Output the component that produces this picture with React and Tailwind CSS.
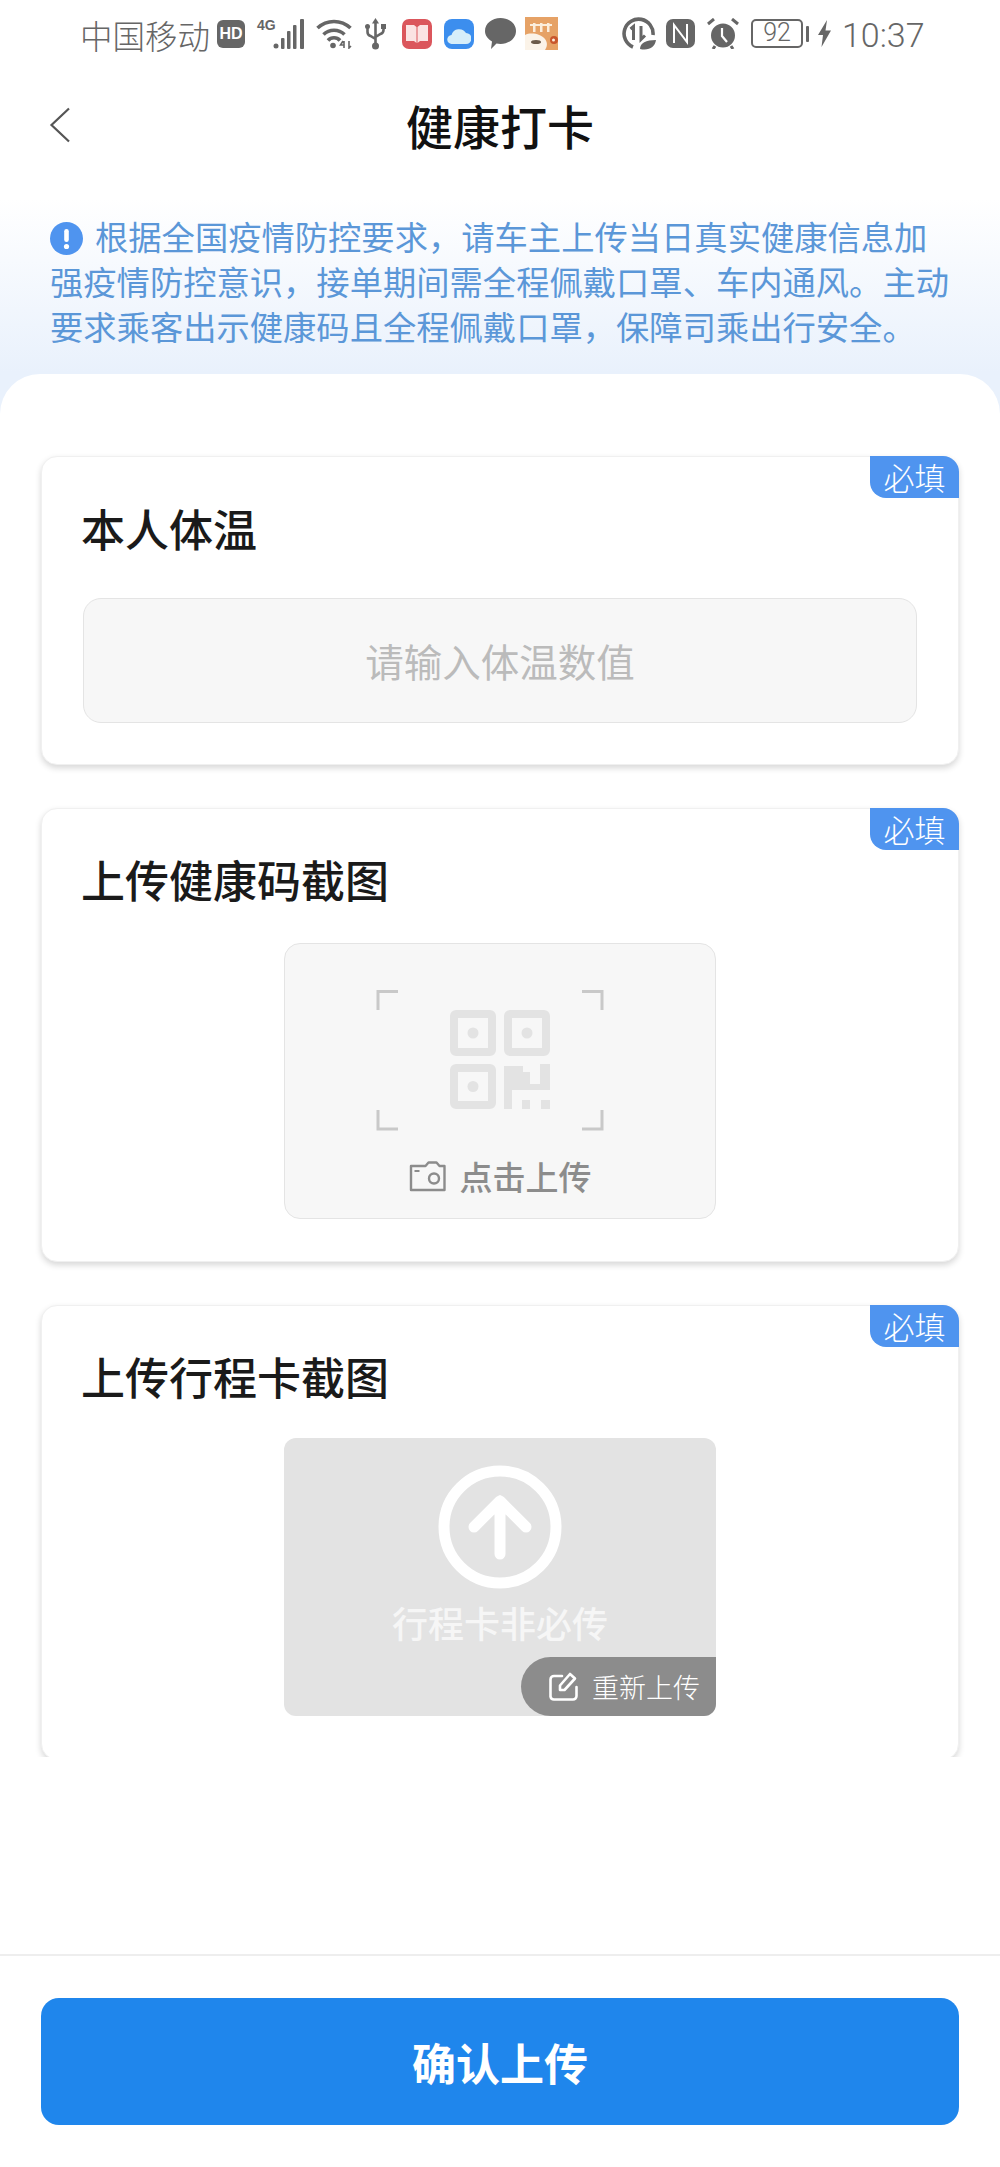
import React from "react";

const cjk = { fontFamily: '"Noto Sans CJK SC", "Noto Sans", sans-serif' };

function StatusBar() {
  return (
    <div className="h-[67px] w-full flex items-center pl-[80px] text-[#666666] shrink-0">
      <span className="mt-[3px] text-[32.500px] leading-none font-light w-[134px] shrink-0 whitespace-nowrap">中国移动</span>
      <div className="w-[28px] h-[28px] ml-[3px] rounded-[6px] bg-[#666666] text-white text-[16px] font-bold leading-[28px] text-center" style={{ fontFamily: '"Liberation Sans", sans-serif' }}>HD</div>
      <div className="relative w-[48px] h-[32px] ml-[12px]">
        <span className="absolute left-0 top-[0px] text-[14px] font-bold leading-none" style={{ fontFamily: '"Liberation Sans", sans-serif' }}>4G</span>
        <svg width="48" height="32" viewBox="0 0 48 32" fill="#666666">
          <circle cx="19" cy="28" r="2.500" /><rect x="24" y="20" width="3.500" height="11" rx="1" /><rect x="30" y="13" width="3.500" height="18" rx="1" /><rect x="36" y="7" width="3.500" height="24" rx="1" /><rect x="43" y="1" width="4" height="30" rx="1" />
        </svg>
      </div>
      <svg className="ml-[11px]" width="36" height="30" viewBox="0 0 36 30" fill="none" stroke="#666666" strokeWidth="3.600">
        <path d="M1.500 9 A24 24 0 0 1 34.500 9" /><path d="M7.500 15.500 A15 15 0 0 1 28.500 15.500" /><path d="M12 21.500 A8 8 0 0 1 24 21.500" />
        <circle cx="17" cy="26.500" r="2.800" fill="#666666" stroke="none" />
        <path d="M27 22l-2.500 4h4M28 22v7M33 22v7l2-2" strokeWidth="1.600" />
      </svg>
      <svg className="ml-[13px]" width="21" height="32" viewBox="0 0 21 32" fill="none" stroke="#666666" strokeWidth="2.600">
        <path d="M10.500 4v25M2.500 9v5q0 3 3 4l5 3M18.500 9v3q0 3-3 4l-5 3" />
        <path d="M10.500 0l3.500 5.500h-7z" fill="#666666" stroke="none" />
        <rect x="0" y="6" width="5" height="5" rx="2.500" fill="#666666" stroke="none" /><rect x="16" y="6" width="5" height="5" fill="#666666" stroke="none" />
        <circle cx="10.500" cy="28" r="3.500" fill="#666666" stroke="none" />
      </svg>
      <div className="ml-[16px] w-[30px] h-[30px] rounded-[7px] bg-[#db565c] flex items-center justify-center">
        <svg width="22" height="19" viewBox="0 0 22 19" fill="#fbe3e3"><path d="M0 1h8l2.500 2v16L8 17H0z" /><path d="M22 1h-8l-2.500 2v16l2.500-2h8z" /></svg>
      </div>
      <div className="ml-[12px] w-[30px] h-[30px] rounded-[8px] bg-[#3c8eee] flex items-end justify-center pb-[5px]">
        <svg width="24" height="18" viewBox="0 0 24 18" fill="#d6eefa"><path d="M5 18a4.500 4.500 0 0 1-.5-9A8 8 0 0 1 19 7a5.500 5.500 0 0 1 0 11z" /></svg>
      </div>
      <svg className="ml-[11px]" width="31" height="31" viewBox="0 0 31 31" fill="#666666"><path d="M15.500 0C24 0 31 5.500 31 13s-7 13-15.500 13c-1.400 0-2.700-.1-4-.4L6 31l1-7.500C3 21 0 17.500 0 13 0 5.500 7 0 15.500 0z" /></svg>
      <svg className="ml-[9px]" width="33" height="33" viewBox="0 0 33 33">
        <rect width="33" height="33" fill="#e6a266" />
        <path d="M8 6h2.500v9H8zM15 6h2.500v9H15zM22 6h2.500v9H22zM5 7h8v2H5zM13 7h7v2h-7zM20 7h7v2h-7z" fill="#fbeedd" />
        <path d="M0 18c6-3 16-1 20 4 3 4 2 8 0 11H0z" fill="#fbf3e8" /><circle cx="29" cy="23" r="4" fill="#c8562d" /><circle cx="28.500" cy="23" r="1.500" fill="#fbeedd" /><ellipse cx="11" cy="25" rx="5" ry="2" fill="#6b5a49" />
      </svg>
      <svg className="ml-[64px]" width="34" height="33" viewBox="0 0 34 33" fill="none" stroke="#666666">
        <path d="M11 30A14.500 14.500 0 1 1 31 18" strokeWidth="3.600" />
        <path d="M8.500 12l3-2.500V23M19 9v13.500l4-4" strokeWidth="3" />
        <path d="M18 32c0-6 6-9 16-9-1 7-7 11-16 9z" fill="#666666" stroke="none" />
      </svg>
      <svg className="ml-[10px]" width="29" height="29" viewBox="0 0 29 29" fill="none"><rect width="29" height="29" rx="7" fill="#666666" /><path d="M8 24V6l13 17V5" stroke="#fff" strokeWidth="2" /></svg>
      <svg className="ml-[12px]" width="32" height="31" viewBox="0 0 32 31" fill="none" stroke="#666666">
        <circle cx="16" cy="17.500" r="11" fill="#666666" strokeWidth="2" /><path d="M15 10v8l5 6" strokeWidth="2.200" stroke="#ffffff" /><path d="M1 6l6-5M31 6l-6-5M8 28l-2 3M24 28l2 3" strokeWidth="3" />
      </svg>
      <div className="ml-[12px] w-[52px] h-[29px] border-[2.500px] border-[#666666] rounded-[5px] text-[25px] leading-[24px] text-center font-light" style={{ fontFamily: "Roboto, sans-serif" }}>92</div>
      <div className="ml-[3px] w-[3px] h-[16px] bg-[#666666] rounded-[1px]" />
      <svg className="ml-[9px]" width="13" height="27" viewBox="0 0 13 27" fill="#666666"><path d="M9 0L0 15h5L3.500 27 13 10.500H7.500z" /></svg>
      <span className="mt-[3px] ml-[11px] text-[34px] leading-none font-light" style={{ fontFamily: "Roboto, sans-serif" }}>10:37</span>
    </div>
  );
}

function Badge() {
  return (
    <div className="absolute -right-px -top-px w-[89px] h-[42px] bg-[#4f94ef] rounded-tr-[16px] rounded-bl-[16px] text-white text-[31px] leading-[42px] font-light text-center">必填</div>
  );
}

function CardTitle({ children, className }) {
  return <div className={"text-[44px] leading-[56px] font-medium text-[#1a1a1a] pl-[39px] " + className}>{children}</div>;
}

function Card({ children, className }) {
  return (
    <div className={"relative mx-[41px] bg-white rounded-[16px] border border-[#f0f0f0] shadow-[0_3px_6px_rgba(0,0,0,0.16)] " + className}>
      <Badge />
      {children}
    </div>
  );
}

function QrFrame() {
  return (
    <svg width="228" height="142" viewBox="0 0 228 142" fill="none" className="block mr-[20px]">
      <g stroke="#c9c9c9" strokeWidth="3">
        <path d="M2 21V2.500h20M206 2.500h20V21M2 121v19h20M206 140h20v-19" />
      </g>
      <g transform="translate(74 21)">
        <g fill="none" stroke="#e3e3e3" strokeWidth="8">
          <rect x="4" y="4" width="38" height="38" rx="2" />
          <rect x="58" y="4" width="38" height="38" rx="2" />
          <rect x="4" y="58" width="38" height="37" rx="2" />
        </g>
        <g fill="#e3e3e3">
          <circle cx="23" cy="23" r="5.500" /><circle cx="77" cy="23" r="5.500" /><circle cx="23" cy="76.500" r="5.500" />
          <path d="M54 56H73V62H80V74H72V80H62V99H54z" />
          <path d="M90 54H100V80H72V74H90z" />
          <rect x="72" y="90" width="8" height="9" /><rect x="91" y="90" width="9" height="9" />
        </g>
      </g>
    </svg>
  );
}

function Camera() {
  return (
    <svg width="37" height="31" viewBox="0 0 37 31" fill="none" stroke="#8c8c8c" strokeWidth="2.400">
      <path d="M2 5h14.500l3-3.500h8l3 3.500H35.500v24H2z" strokeLinejoin="round" />
      <circle cx="25" cy="17.500" r="5" />
      <path d="M5.500 10h5" strokeWidth="2" />
    </svg>
  );
}

function EditIcon() {
  return (
    <svg width="29" height="29" viewBox="0 0 29 29" fill="none" stroke="#ffffff" strokeWidth="2.600" strokeLinecap="round" strokeLinejoin="round">
      <path d="M13 4H5a3.500 3.500 0 0 0-3.500 3.500v17A3.500 3.500 0 0 0 5 27.500h19a3.500 3.500 0 0 0 3.500-3.500V15" />
      <path d="M11 18v-4.500L21 2l5 4.500L15.500 18z" />
    </svg>
  );
}

export default function App() {
  return (
    <div className="relative w-[1000px] h-[2167px] bg-white overflow-hidden flex flex-col" style={cjk}>
      <div className="h-[414px] shrink-0 bg-gradient-to-b from-[#ffffff] from-[48%] to-[#e9f1fc] to-[90%]">
        <StatusBar />
        <div className="relative h-[116px] flex items-center justify-center">
          <svg className="absolute left-[49px] top-[40px]" width="22" height="36" viewBox="0 0 22 36" fill="none" stroke="#555555" strokeWidth="2.200"><path d="M20 1.500L2.500 18 20 34.500" /></svg>
          <span className="text-[47px] leading-[60px] font-medium text-[#111111]">健康打卡</span>
        </div>
        <p className="mt-[30px] px-[50px] text-[33.300px] leading-[45px] text-[#5b97d8] w-[1000px]">
          <svg className="inline-block align-[-5px] mr-[12px]" width="33" height="33" viewBox="0 0 33 33"><circle cx="16.500" cy="16.500" r="16.500" fill="#4f94ef" /><rect x="14.200" y="7" width="4.600" height="13" rx="2.300" fill="#fff" /><circle cx="16.500" cy="24.500" r="2.600" fill="#fff" /></svg>
          根据全国疫情防控要求，请车主上传当日真实健康信息加强疫情防控意识，接单期间需全程佩戴口罩、车内通风。主动要求乘客出示健康码且全程佩戴口罩，保障司乘出行安全。
        </p>
      </div>
      <div className="relative -mt-[40px] bg-white rounded-t-[40px] flex-1 flex flex-col">
        <div className="h-[1383px] pt-[82px] overflow-hidden flex flex-col gap-[43px]">
          <Card className="h-[309px] shrink-0">
            <CardTitle className="pt-[43px]">本人体温</CardTitle>
            <div className="mx-[41px] mt-[42px] h-[125px] bg-[#f7f7f7] border border-[#e4e4e4] rounded-[18px] flex items-center justify-center text-[38.500px] text-[#bbbbbb]">请输入体温数值</div>
          </Card>
          <Card className="h-[454px] shrink-0">
            <CardTitle className="pt-[42px]">上传健康码截图</CardTitle>
            <div className="w-[432px] h-[276px] mx-auto mt-[36px] bg-[#f7f7f7] border border-[#e4e4e4] rounded-[16px] flex flex-col items-center pt-[45px]">
              <QrFrame />
              <div className="flex items-center gap-[14px] mt-[28px]">
                <Camera />
                <span className="text-[33px] leading-[34px] font-medium text-[#8c8c8c]">点击上传</span>
              </div>
            </div>
          </Card>
          <Card className="h-[455px] shrink-0">
            <CardTitle className="pt-[42px]">上传行程卡截图</CardTitle>
            <div className="relative w-[432px] h-[278px] mx-auto mt-[34px] bg-[#e3e3e3] rounded-[12px] overflow-hidden flex flex-col items-center pt-[27px]">
              <svg width="124" height="124" viewBox="0 0 124 124" fill="none" stroke="#ffffff" strokeLinecap="round" strokeLinejoin="round">
                <circle cx="62" cy="62" r="56" strokeWidth="11" />
                <path d="M62 89V36M36 62L62 36l26 26" strokeWidth="11" />
              </svg>
              <span className="mt-[10px] text-[36px] leading-[46px] font-medium text-[#f6f6f6]">行程卡非必传</span>
              <div className="absolute right-0 bottom-0 w-[195px] h-[59px] bg-[#8c8c8c] rounded-l-[30px] flex items-center pl-[28px] gap-[14px] text-white">
                <EditIcon />
                <span className="text-[27px] leading-none font-light whitespace-nowrap">重新上传</span>
              </div>
            </div>
          </Card>
        </div>
        <div className="mt-[197px] h-[2px] bg-[#eeeeee]" />
        <div className="mx-[41px] mt-[42px] h-[127px] rounded-[18px] bg-[#1f86ec] flex items-center justify-center text-[44px] font-bold text-white">确认上传</div>
      </div>
    </div>
  );
}
